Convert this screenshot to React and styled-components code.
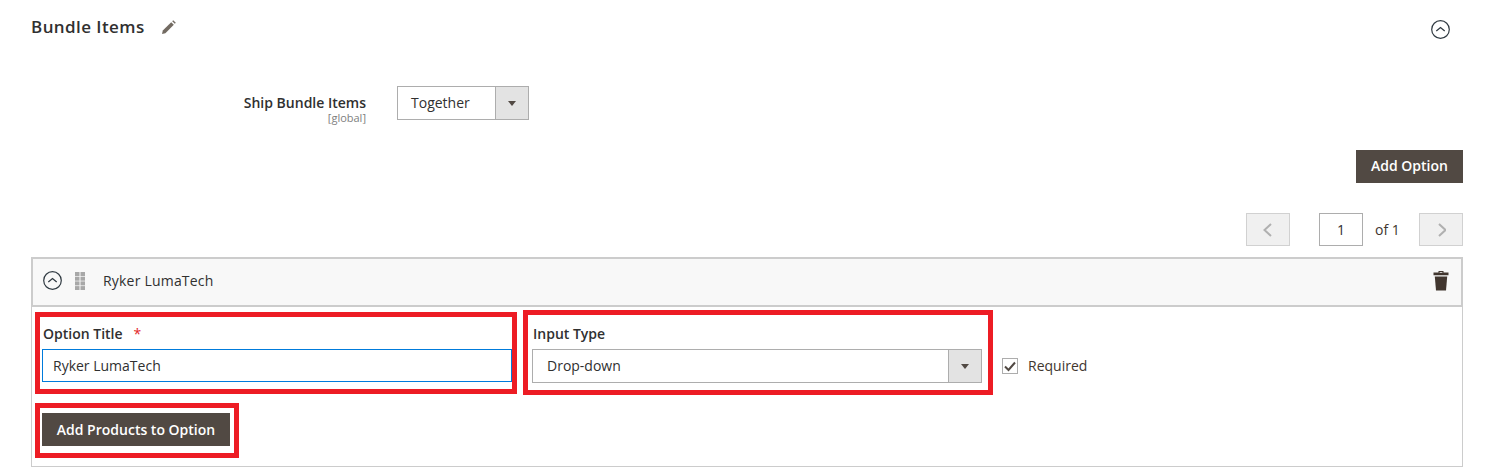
import React from "react";
import styled, { createGlobalStyle } from "styled-components";

const Global = createGlobalStyle`
  html, body { margin: 0; padding: 0; background: #fff; }
  * { box-sizing: border-box; }
  body { font-family: "Open Sans", "Liberation Sans", sans-serif; font-size: 14px; color: #303030; }
`;

const Page = styled.div`
  width: 1493px;
  padding: 0 30px 0 31px;
`;
const SectionHead = styled.header`
  height: 58px;
  display: flex;
  align-items: flex-start;
  justify-content: space-between;
`;
const TitleGroup = styled.div`
  display: flex;
  align-items: center;
  gap: 17px;
  height: 54px;
`;
const Title = styled.h2`
  margin: 0;
  font-size: 17px;
  font-weight: 600;
  letter-spacing: 0.42px;
  color: #303030;
  line-height: 24px;
`;
const CollapseTop = styled.div`
  display: flex;
  margin: 20px 13px 0 0;
`;
const ShipRow = styled.div`
  margin-top: 28px;
  height: 34px;
  display: flex;
  align-items: flex-start;
`;
const ShipLabel = styled.div`
  width: 336px;
  text-align: right;
  margin-right: 30px;
  font-weight: 600;
  line-height: 20px;
  padding: 7px 1px 0 0;
`;
const Scope = styled.div`
  font-size: 11px;
  font-weight: 400;
  color: #808080;
  line-height: 12px;
  margin-top: -1px;
`;
const Select = styled.div`
  width: ${(p) => p.$w}px;
  height: 34px;
  border: 1px solid #adadad;
  display: flex;
  align-items: center;
  justify-content: space-between;
  background: #fff;
  padding-left: ${(p) => p.$pad}px;
  color: #303030;
`;
const SelectText = styled.span`
  margin-bottom: 2px;
`;
const Arrow = styled.div`
  width: 33px;
  height: 32px;
  background: #e3e3e3;
  border-left: 1px solid #adadad;
  display: flex;
  align-items: center;
  justify-content: center;
  &::after {
    content: "";
    border-style: solid;
    border-width: 5px 4px 0 4px;
    border-color: #514943 transparent transparent transparent;
  }
`;
const ActionRow = styled.div`
  margin-top: 30px;
  display: flex;
  justify-content: flex-end;
`;
const DarkButton = styled.button`
  height: 33px;
  width: ${(p) => p.$w}px;
  background: #514943;
  border: 0;
  color: #fff;
  font: 600 14px "Open Sans", sans-serif;
  padding: 0 0 ${(p) => p.$lift}px;
`;
const Pager = styled.div`
  margin-top: 30px;
  height: 33px;
  display: flex;
  justify-content: flex-end;
  align-items: center;
`;
const PageButton = styled.div`
  width: 44px;
  height: 33px;
  background: #f0f0f0;
  border: 1px solid #d1d1d1;
  display: flex;
  align-items: center;
  justify-content: center;
`;
const PageInput = styled.div`
  width: 44px;
  height: 33px;
  margin-left: 29px;
  border: 1px solid #adadad;
  display: flex;
  align-items: center;
  justify-content: center;
`;
const PageOf = styled.div`
  width: 56px;
  padding-left: 12px;
  color: #41362f;
`;
const Panel = styled.section`
  margin-top: 11px;
  border: 1px solid #ccc;
  border-top: 0;
  height: 210px;
`;
const PanelHead = styled.div`
  height: 50px;
  margin-left: -1px;
  margin-right: -1px;
  border: 2px solid #ccc;
  background: #f8f8f8;
  display: flex;
  align-items: center;
  padding: 0 12px 3px 10px;
`;
const Grip = styled.div`
  margin-left: 13px;
  display: flex;
`;
const PanelName = styled.div`
  margin-left: 18px;
  flex: 1;
  color: #303030;
  letter-spacing: 0.2px;
`;
const FieldRow = styled.div`
  display: flex;
  align-items: flex-start;
  padding: 3px 0 0 3px;
`;
const RedFrame = styled.div`
  border: 5px solid #ed1c24;
  width: ${(p) => p.$w}px;
  height: ${(p) => p.$h}px;
  padding: ${(p) => p.$pad};
  margin-left: ${(p) => p.$ml || 0}px;
  margin-top: ${(p) => p.$mt || 0}px;
`;
const FieldLabel = styled.div`
  font-weight: 600;
  line-height: 20px;
  height: ${(p) => p.$top + 25}px;
  padding: ${(p) => p.$top}px 0 0 1px;
`;
const Star = styled.span`
  color: #e22626;
  margin-left: 11px;
  font-weight: 400;
`;
const TextInput = styled.div`
  height: 33px;
  border: 1px solid #007bdb;
  padding-left: 10px;
  line-height: 31px;
  color: #303030;
`;
const Check = styled.div`
  margin: 46px 0 0 9px;
  display: flex;
  align-items: center;
  height: 20px;
  color: #41362f;
`;
const CheckText = styled.span`
  margin-bottom: 2px;
`;
const Box = styled.div`
  width: 16px;
  height: 16px;
  border: 1px solid #adadad;
  margin-right: 10px;
  display: flex;
  align-items: center;
  justify-content: center;
`;
const ButtonFrameRow = styled.div`
  padding: 8px 0 0 3px;
`;

const CircleUp = () => (
  <svg width="19" height="19" viewBox="0 0 19 19" fill="none" stroke="#303a42" strokeWidth="1.2">
    <circle cx="9.5" cy="9.5" r="8.8" />
    <path d="M5.3 11 L9.5 7.6 L13.7 11" strokeWidth="1.3" />
  </svg>
);
const Pencil = () => (
  <svg width="14" height="14" viewBox="0 0 14 14">
    <path d="M0 14 L0.8 10.6 L9.2 2.2 L11.8 4.8 L3.4 13.2 Z" fill="#736b62" />
    <path d="M10.2 1.2 L11.2 0.2 L13.8 2.8 L12.8 3.8 Z" fill="#736b62" />
  </svg>
);
const ChevronL = () => (
  <svg width="10" height="14" viewBox="0 0 10 14" fill="none" stroke="#b0b0b0" strokeWidth="2">
    <path d="M8 1 L1.5 7 L8 13" />
  </svg>
);
const ChevronR = () => (
  <svg width="10" height="14" viewBox="0 0 10 14" fill="none" stroke="#b0b0b0" strokeWidth="2">
    <path d="M3 1 L9.5 7 L3 13" />
  </svg>
);
const Trash = () => (
  <svg width="16" height="21" viewBox="0 0 16 20" fill="#41362f">
    <path d="M5.5 2 V0.5 H10.5 V2 H15.5 V4.8 H0.5 V2 Z M6.6 1.4 V2.2 H9.4 V1.4 Z" fillRule="evenodd" />
    <path d="M1.8 6 H14.2 L13 20 H3 Z" />
  </svg>
);
const GripIcon = () => (
  <svg width="10" height="18" viewBox="0 0 10 18" fill="#a8a8a8">
    {[0, 1, 2, 3].flatMap((r) =>
      [0, 1].map((c) => <rect key={`${r}-${c}`} x={c * 5.5} y={r * 4.7} width="4.5" height="4" />)
    )}
  </svg>
);
const Tick = () => (
  <svg width="12" height="11" viewBox="0 0 12 11" fill="none" stroke="#514943" strokeWidth="2">
    <path d="M1 5.5 L4.5 9 L11 1.5" />
  </svg>
);

export default function App() {
  return (
    <Page>
      <Global />
      <SectionHead>
        <TitleGroup>
          <Title>Bundle Items</Title>
          <Pencil />
        </TitleGroup>
        <CollapseTop>
          <CircleUp />
        </CollapseTop>
      </SectionHead>
      <ShipRow>
        <ShipLabel>
          Ship Bundle Items
          <Scope>[global]</Scope>
        </ShipLabel>
        <Select $w={132} $pad={13}>
          <SelectText>Together</SelectText>
          <Arrow />
        </Select>
      </ShipRow>
      <ActionRow>
        <DarkButton $w={107} $lift={2}>Add Option</DarkButton>
      </ActionRow>
      <Pager>
        <PageButton>
          <ChevronL />
        </PageButton>
        <PageInput>1</PageInput>
        <PageOf>of 1</PageOf>
        <PageButton>
          <ChevronR />
        </PageButton>
      </Pager>
      <Panel>
        <PanelHead>
          <CircleUp />
          <Grip>
            <GripIcon />
          </Grip>
          <PanelName>Ryker LumaTech</PanelName>
          <Trash />
        </PanelHead>
        <FieldRow>
          <RedFrame $w={482} $h={82} $mt={2} $pad="0 0 0 2px">
            <FieldLabel $top={7}>
              Option Title<Star>*</Star>
            </FieldLabel>
            <TextInput>Ryker LumaTech</TextInput>
          </RedFrame>
          <RedFrame $w={470} $h={85} $ml={6} $pad="0 6px 0 4px">
            <FieldLabel $top={9}>Input Type</FieldLabel>
            <Select $w={450} $pad={14}>
              <SelectText>Drop-down</SelectText>
              <Arrow />
            </Select>
          </RedFrame>
          <Check>
            <Box>
              <Tick />
            </Box>
            <CheckText>Required</CheckText>
          </Check>
        </FieldRow>
        <ButtonFrameRow>
          <RedFrame $w={204} $h={55} $pad="5px 0 0 2px">
            <DarkButton $w={188} $lift={0}>Add Products to Option</DarkButton>
          </RedFrame>
        </ButtonFrameRow>
      </Panel>
    </Page>
  );
}
